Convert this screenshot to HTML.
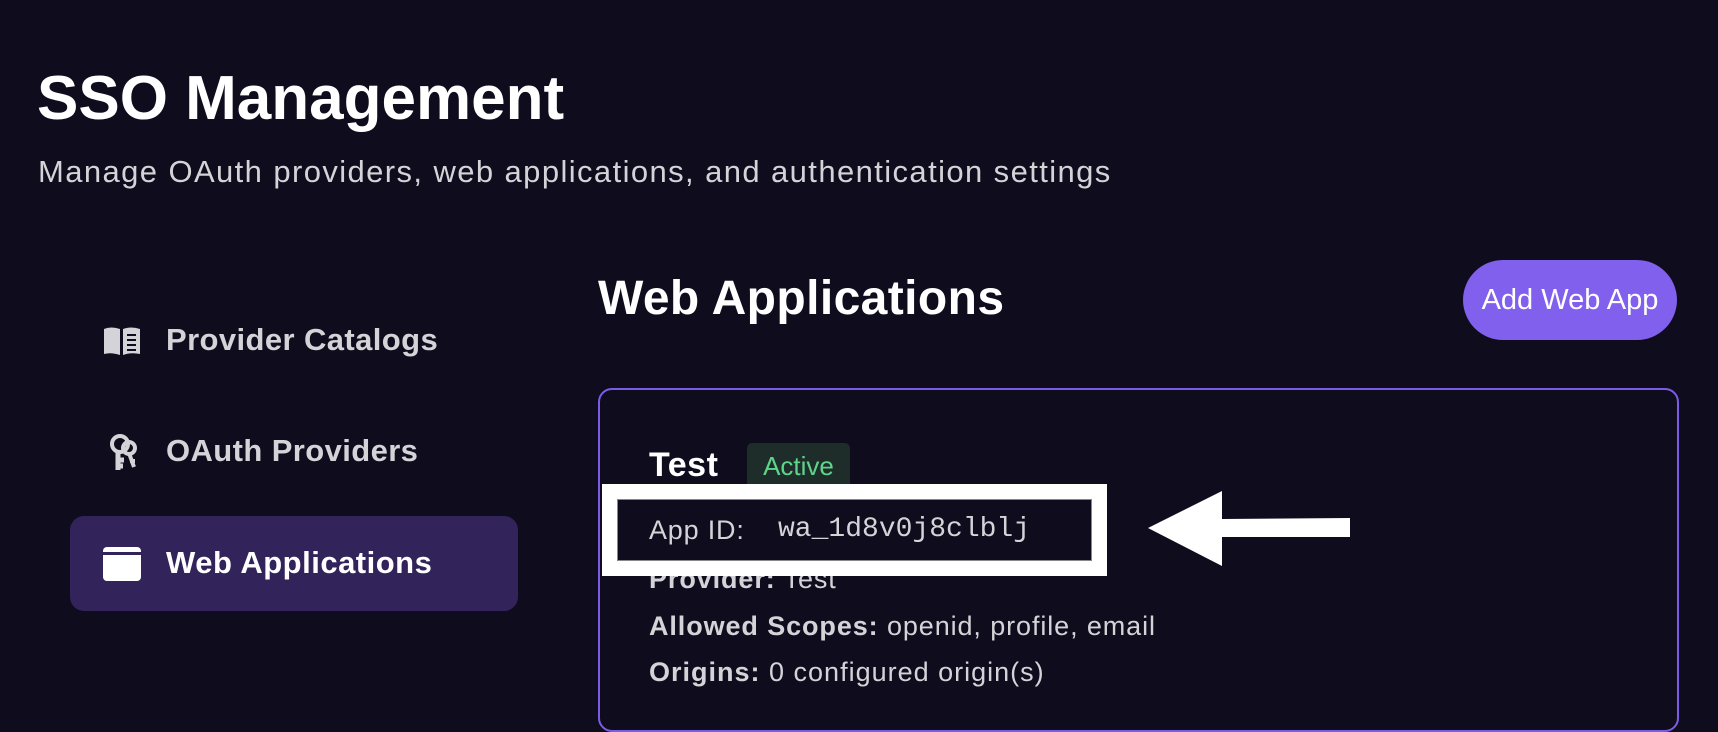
<!DOCTYPE html>
<html><head><meta charset="utf-8"><style>
html,body{margin:0;padding:0;background:#0f0c1d;width:1718px;height:703px;overflow:hidden;font-family:"Liberation Sans",sans-serif;}
.a{position:absolute;white-space:nowrap;}
</style></head><body>
<div class="a" style="left:37px;top:63px;font-size:62px;font-weight:bold;color:#fff;">SSO Management</div>
<div class="a" style="left:38px;top:154px;font-size:31px;color:#d4d4d8;letter-spacing:1.4px;">Manage OAuth providers, web applications, and authentication settings</div>

<!-- sidebar -->
<svg class="a" style="left:103px;top:326px" width="38" height="30" viewBox="0 0 38 30">
<path d="M1 3 Q8 0 17 3 L17 29 Q8 26 1 28 Z" fill="#d4d4d8"/>
<path d="M20 3 Q28 0 37 3 L37 28 Q28 26 20 29 Z" fill="#d4d4d8"/>
<path d="M24 9h9M24 14h9M24 19h9M24 24h9" stroke="#0f0c1d" stroke-width="2"/>
</svg>
<div class="a" style="left:166px;top:322px;font-size:31px;font-weight:bold;color:#d4d4d8;letter-spacing:0.4px;">Provider Catalogs</div>

<svg class="a" style="left:108px;top:432px" width="30" height="40" viewBox="0 0 30 40">
<circle cx="12" cy="12" r="8" fill="none" stroke="#d4d4d8" stroke-width="4"/>
<path d="M10 18v20M10 28h6M10 34h5" stroke="#d4d4d8" stroke-width="5" fill="none"/>
<circle cx="21" cy="16" r="6" fill="none" stroke="#d4d4d8" stroke-width="4"/>
<path d="M21 21l5 14M22 29h5" stroke="#d4d4d8" stroke-width="4" fill="none"/>
</svg>
<div class="a" style="left:166px;top:433px;font-size:31px;font-weight:bold;color:#d4d4d8;letter-spacing:0.4px;">OAuth Providers</div>

<div class="a" style="left:70px;top:516px;width:448px;height:95px;background:#32245a;border-radius:14px;"></div>
<svg class="a" style="left:103px;top:547px" width="38" height="34" viewBox="0 0 38 34">
<rect x="0" y="0" width="38" height="34" rx="4" fill="#fff"/><rect x="0" y="5" width="38" height="3" fill="#32245a"/>
</svg>
<div class="a" style="left:166px;top:545px;font-size:31px;font-weight:bold;color:#fff;letter-spacing:0.5px;">Web Applications</div>

<!-- main -->
<div class="a" style="left:598px;top:271px;font-size:48px;font-weight:bold;color:#fff;letter-spacing:0.4px;">Web Applications</div>
<div class="a" style="left:1463px;top:260px;width:214px;height:80px;border-radius:40px;background:#8160ee;color:#fff;font-size:29px;line-height:80px;text-align:center;">Add Web App</div>

<div class="a" style="left:598px;top:388px;width:1077px;height:340px;border:2px solid #7c5ce6;border-radius:14px;"></div>
<div class="a" style="left:649px;top:446px;font-size:34px;font-weight:bold;color:#fff;letter-spacing:0.5px;">Test</div>
<div class="a" style="left:747px;top:443px;width:103px;height:46px;background:#1e2c2a;border-radius:5px;color:#5ed48a;font-size:26px;line-height:46px;text-align:center;">Active</div>
<div class="a" style="left:649px;top:564px;font-size:27px;color:#d4d4d8;letter-spacing:0.9px;"><b>Provider:</b> Test</div>
<div class="a" style="left:649px;top:611px;font-size:27px;color:#d4d4d8;letter-spacing:0.9px;"><b>Allowed Scopes:</b> openid, profile, email</div>
<div class="a" style="left:649px;top:657px;font-size:27px;color:#d4d4d8;letter-spacing:1px;"><b>Origins:</b> 0 configured origin(s)</div>

<!-- annotation box -->
<div class="a" style="left:602px;top:484px;width:475px;height:62px;border:15px solid #fff;background:#0f0c1d;box-shadow:inset 0 0 0 1px #888;"></div>
<div class="a" style="left:649px;top:515px;font-size:27px;color:#d4d4d8;letter-spacing:0.8px;">App ID:</div>
<div class="a" style="left:778px;top:514px;font-size:28px;color:#d4d4d8;font-family:'Liberation Mono',monospace;">wa_1d8v0j8clblj</div>

<svg class="a" style="left:1140px;top:485px" width="220" height="90" viewBox="0 0 220 90">
<path d="M8 43 L82 6 L82 34 L210 33 L210 52 L82 52 L82 81 Z" fill="#fff"/>
</svg>
</body></html>
